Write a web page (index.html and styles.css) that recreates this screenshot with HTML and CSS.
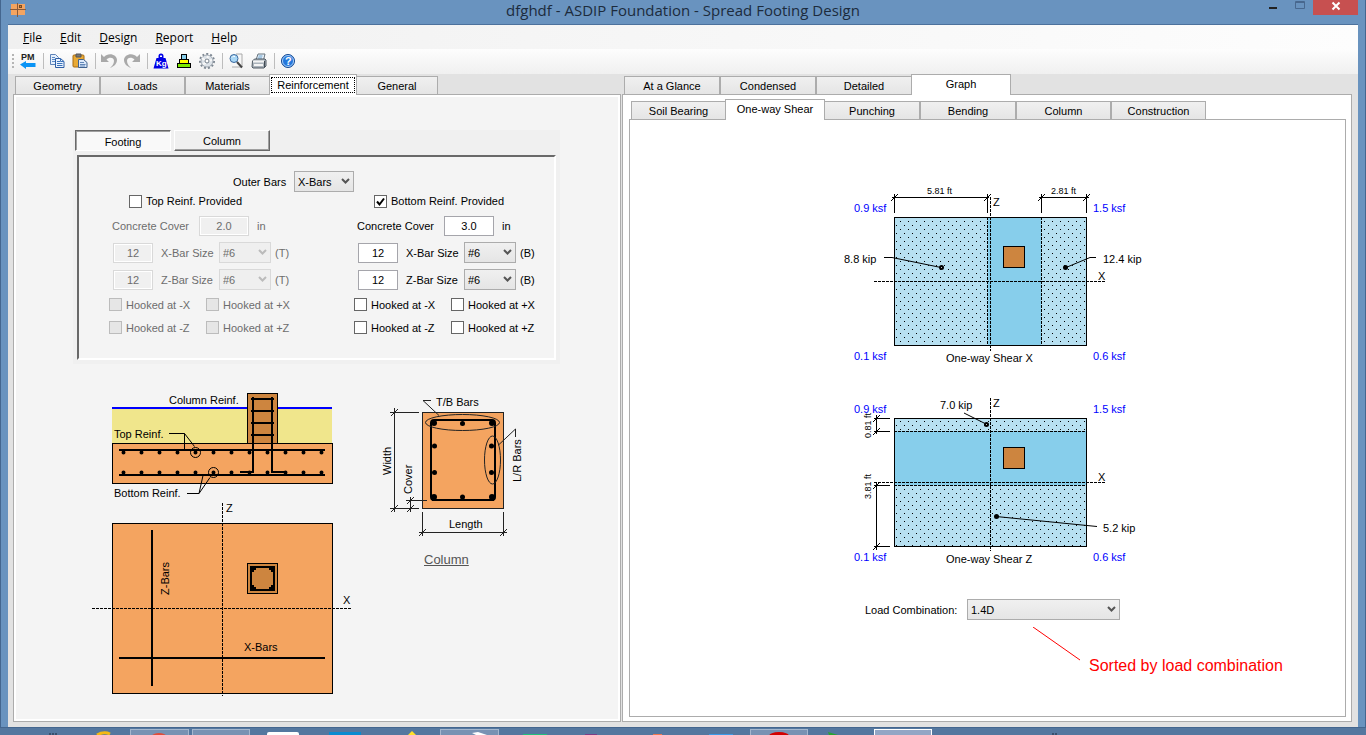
FILE: index.html
```html
<!DOCTYPE html>
<html lang="en">
<head>
<meta charset="utf-8">
<title>dfghdf - ASDIP Foundation - Spread Footing Design</title>
<link rel="stylesheet" href="styles.css">
</head>
<body>
<div class="frame">
  <header class="titlebar">
    <svg class="app-icon" width="16" height="14" viewBox="0 0 16 14" shape-rendering="crispEdges"><rect x="1" y="1" width="14" height="11" fill="#f4a460"/><path d="M0 6.500h16M7.500 0v14" stroke="#8a5a3a"/><rect x="9.500" y="2.500" width="2" height="2" fill="#cd853f" stroke="#7a4a20"/></svg>
    <h1 class="title">dfghdf - ASDIP Foundation - Spread Footing Design</h1>
    <div class="window-buttons">
      <button class="win-btn" aria-label="Minimize"><svg width="10" height="10" viewBox="0 0 10 10"><path d="M1 8h8" stroke="#222" stroke-width="2"/></svg></button>
      <button class="win-btn" aria-label="Maximize"><svg width="10" height="10" viewBox="0 0 10 10"><path d="M.5 1.500h9v7h-9zM0 2.500h10" fill="none" stroke="#48688f"/></svg></button>
      <button class="win-btn close" aria-label="Close"><svg width="10" height="10" viewBox="0 0 10 10"><path d="M1.500 1.500l7 7m0-7l-7 7" stroke="#fff" stroke-width="2"/></svg></button>
    </div>
  </header>
  <main class="window">
    <nav class="menubar">
      <button class="menu"><u>F</u>ile</button>
      <button class="menu"><u>E</u>dit</button>
      <button class="menu"><u>D</u>esign</button>
      <button class="menu"><u>R</u>eport</button>
      <button class="menu"><u>H</u>elp</button>
    </nav>
    <div class="toolbar">
      <span class="grip"></span>
      <button class="tool" aria-label="PM"><svg width="16" height="16" viewBox="0 0 16 16"><text x="1" y="7" font-size="9" font-weight="bold" fill="#222">PM</text><path d="M0 11.500L6 8v2h9.500v4H6v2z" fill="#0a94f5"/></svg></button>
      <span class="sep"></span>
      <button class="tool" aria-label="Copy"><svg width="16" height="16" viewBox="0 0 16 16"><path d="M1.500 1.500h5l3 3v7h-8z" fill="#e6f0fc" stroke="#5e83b8"/><path d="M3 4.500h3M3 6.500h4M3 8.500h4" stroke="#5b8ac6"/><path d="M6.500 5.500h5l3.500 3v6h-8.500z" fill="#eaf3ff" stroke="#2e5ea5"/><path d="M11.500 5.500v3h3.500M8 8.500h3M8 10.500h5.500M8 12.500h5.500" fill="none" stroke="#3c73ba"/></svg></button>
      <button class="tool" aria-label="Paste"><svg width="16" height="16" viewBox="0 0 16 16"><rect x="1" y="2" width="11" height="12" rx="1" fill="#e9aa35" stroke="#a76b12"/><path d="M4 1h5v3H4z" fill="#777" stroke="#555"/><path d="M6.500 6.500h5l3.500 3v5H6.500z" fill="#dce9fa" stroke="#40628f"/><path d="M8 9.500h4M8 11.500h5.500M8 13h5" stroke="#6287b8"/></svg></button>
      <span class="sep"></span>
      <button class="tool" aria-label="Undo"><svg width="16" height="16" viewBox="0 0 16 16"><path d="M0 1v8h8L5.500 6.500C8 4 13 4 13 8c0 3-2 5-4 7 5-2 7-5 7-8C16 1 7-1 3 4z" fill="#a9a9a9"/></svg></button>
      <button class="tool" aria-label="Redo"><svg width="16" height="16" viewBox="0 0 16 16"><path d="M16 1v8H8l2.500-2.500C8 4 3 4 3 8c0 3 2 5 4 7-5-2-7-5-7-8C0 1 9-1 13 4z" fill="#a9a9a9"/></svg></button>
      <span class="sep"></span>
      <button class="tool" aria-label="Weights"><svg width="16" height="16" viewBox="0 0 16 16"><path d="M5.500 3a2.500 2.500 0 0 1 5 0v2h2l3 10.500h-15L3.500 5h2z" fill="#0000e6"/><path d="M7 4V2.500h2V4z" fill="#fff"/><text x="3" y="13" font-size="8" font-weight="bold" fill="#fff">Kg</text></svg></button>
      <button class="tool" aria-label="Stack"><svg width="16" height="16" viewBox="0 0 16 16" shape-rendering="crispEdges" stroke="#000"><rect x="5.500" y="1.500" width="5" height="5" fill="#87ceeb"/><rect x="3.500" y="6.500" width="9" height="4" fill="#ff0"/><rect x="1.500" y="10.500" width="13" height="4" fill="#7dea00"/></svg></button>
      <button class="tool" aria-label="Settings"><svg width="18" height="18" viewBox="0 0 18 18"><circle cx="9" cy="9" r="7" fill="none" stroke="#7d8792" stroke-width="2" stroke-dasharray="2 2"/><circle cx="9" cy="9" r="6" fill="#dce2e8" stroke="#a3abb4"/><path d="M4 6l4 3m2-5l-1 4m5 0l-4 1m-5 3l3-1" stroke="#f8f8f8" stroke-width="2"/><circle cx="9" cy="9" r="2" fill="#fff" stroke="#76818c"/></svg></button>
      <span class="sep"></span>
      <button class="tool" aria-label="Preview"><svg width="16" height="16" viewBox="0 0 16 16"><path d="M8 1h6v13H4" fill="#f7f7f7" stroke="#aaa"/><circle cx="6" cy="5.500" r="4" fill="#a9d7f5" stroke="#3c6aa0"/><path d="M4 4.500q1-2 3-1" stroke="#fff" fill="none"/><path d="M9 9l5 5.500" stroke="#444" stroke-width="2"/></svg></button>
      <button class="tool" aria-label="Print"><svg width="16" height="16" viewBox="0 0 16 16"><path d="M5 7l2-6h7l-1.500 6z" fill="#eaf3fb" stroke="#67747e"/><path d="M7.500 3h4M7 5h4" stroke="#68a0cd"/><path d="M1.500 8l2-2H14l1 1v6l-2 2H2l-1-1z" fill="#abb4bc" stroke="#515b64"/><path d="M2 8.500h11M3 12h9" stroke="#f4f4f4" stroke-width="2"/><path d="M13.500 8v6" stroke="#414b54"/></svg></button>
      <span class="sep"></span>
      <button class="tool" aria-label="Help"><svg width="16" height="16" viewBox="0 0 16 16"><circle cx="8" cy="8" r="6.500" fill="#2477dc" stroke="#174990"/><circle cx="8" cy="8" r="5.500" fill="none" stroke="#a8cdf5"/><text x="5" y="12" font-size="11" font-weight="bold" fill="#fff">?</text></svg></button>
    </div>

    <div class="workspace">
      <section class="pane">
        <div class="tabs" role="tablist">
          <button class="tab w85" role="tab">Geometry</button>
          <button class="tab w85" role="tab">Loads</button>
          <button class="tab w85" role="tab">Materials</button>
          <button class="tab w88 selected focused" role="tab" aria-selected="true"><span>Reinforcement</span></button>
          <button class="tab w82" role="tab">General</button>
        </div>
        <div class="sheet input-sheet">
          <div class="form-block">
            <div class="toggles">
              <button class="toggle pressed">Footing</button>
              <button class="toggle">Column</button>
            </div>
            <form class="group">
              <div class="outer-row">
                <label for="outer">Outer Bars</label>
                <select id="outer" class="sel w60"><option>X-Bars</option></select>
              </div>
              <div class="layers">
                <div class="layer">
                  <div class="row check-row"><label class="check"><input type="checkbox">Top Reinf. Provided</label></div>
                  <div class="off">
                    <div class="row cover-row"><label for="tc">Concrete Cover</label><input id="tc" class="num w50" value="2.0" disabled><span>in</span></div>
                    <div class="row bar-row"><input class="num w40" value="12" aria-label="X bars" disabled><label for="tx">X-Bar Size</label><select id="tx" class="sel w52" disabled><option>#6</option></select><span>(T)</span></div>
                    <div class="row bar-row"><input class="num w40" value="12" aria-label="Z bars" disabled><label for="tz">Z-Bar Size</label><select id="tz" class="sel w52" disabled><option>#6</option></select><span>(T)</span></div>
                    <div class="row hook-row"><label class="check"><input type="checkbox" disabled>Hooked at -X</label><label class="check"><input type="checkbox" disabled>Hooked at +X</label></div>
                    <div class="row hook-row"><label class="check"><input type="checkbox" disabled>Hooked at -Z</label><label class="check"><input type="checkbox" disabled>Hooked at +Z</label></div>
                  </div>
                </div>
                <div class="layer">
                  <div class="row check-row"><label class="check"><input type="checkbox" checked>Bottom Reinf. Provided</label></div>
                  <div>
                    <div class="row cover-row"><label for="bc">Concrete Cover</label><input id="bc" class="num w50" value="3.0"><span>in</span></div>
                    <div class="row bar-row"><input class="num w40" value="12" aria-label="X bars"><label for="bx">X-Bar Size</label><select id="bx" class="sel w52"><option>#6</option></select><span>(B)</span></div>
                    <div class="row bar-row"><input class="num w40" value="12" aria-label="Z bars"><label for="bz">Z-Bar Size</label><select id="bz" class="sel w52"><option>#6</option></select><span>(B)</span></div>
                    <div class="row hook-row"><label class="check"><input type="checkbox">Hooked at -X</label><label class="check"><input type="checkbox">Hooked at +X</label></div>
                    <div class="row hook-row"><label class="check"><input type="checkbox">Hooked at -Z</label><label class="check"><input type="checkbox">Hooked at +Z</label></div>
                  </div>
                </div>
              </div>
            </form>
          </div>

          <div class="figures">
            <svg class="drawing" width="265" height="310" viewBox="92 390 265 310">
              <g shape-rendering="crispEdges">
                <rect x="112" y="409" width="220" height="35" fill="#f0e68c"/>
                <rect x="112" y="407" width="220" height="2" fill="#00f"/>
                <rect x="112.500" y="443.500" width="220" height="40" fill="#f4a460" stroke="#000"/>
                <rect x="247.500" y="393.500" width="30" height="50" fill="#cd853f" stroke="#000"/>
                <path d="M253 397v75h-13M272 397v75h15M251 399h23M251 411h23M251 423h23M251 435h23M119 450h206M119 475h206" fill="none" stroke="#000" stroke-width="2"/>
              </g>
              <g stroke="#000" stroke-width="4" stroke-linecap="round" stroke-dasharray="0 18">
                <path d="M123.500 452.500h199"/><path d="M123.500 472.500h199"/>
              </g>
              <g fill="none" stroke="#000">
                <circle cx="195.500" cy="452.500" r="5"/><circle cx="213.500" cy="472.500" r="5"/>
                <path d="M169 433.500h15.500v16M184.500 433.500l10 13M187 493.500h12l4-18M199 493.500l11-16"/>
              </g>
              <text x="169" y="404">Column Reinf.</text>
              <text x="114" y="438">Top Reinf.</text>
              <text x="114" y="497">Bottom Reinf.</text>
              <g shape-rendering="crispEdges">
                <rect x="112.500" y="523.500" width="220" height="170" fill="#f4a460" stroke="#000"/>
                <path d="M152 530v156M119 658h206" stroke="#000" stroke-width="2"/>
                <path d="M222.500 503v193M92 608.500h260" stroke="#000" stroke-dasharray="3 1"/>
                <rect x="247.500" y="563.500" width="30" height="30" fill="#cd853f" stroke="#000"/>
                <rect x="251" y="567" width="23" height="23" fill="none" stroke="#000" stroke-width="2"/>
                <path d="M252 568h4v2h-2v2h-2zM273 568h-4v2h2v2h2zM252 589h4v-2h-2v-2h-2zM273 589h-4v-2h2v-2h2z"/>
              </g>
              <text x="226" y="512">Z</text>
              <text x="343" y="604">X</text>
              <text x="244" y="651">X-Bars</text>
              <text transform="translate(169 595) rotate(-90)">Z-Bars</text>
            </svg>
            <div class="column-figure">
              <svg class="drawing" width="150" height="150" viewBox="376 390 150 150">
                <rect x="422.500" y="412.500" width="81" height="96" fill="#f4a460" stroke="#222"/>
                <rect x="431" y="420" width="64" height="80" rx="3" fill="none" stroke="#000" stroke-width="2"/>
                <path d="M432 500h62" stroke="#000" stroke-width="2"/>
                <g><circle cx="434" cy="423" r="3"/><circle cx="462.500" cy="423.500" r="2.500"/><circle cx="492" cy="423" r="3"/><circle cx="434.500" cy="446" r="2.500"/><circle cx="491.500" cy="446" r="2.500"/><circle cx="434.500" cy="472.500" r="2.500"/><circle cx="491.500" cy="472.500" r="2.500"/><circle cx="434" cy="497" r="3"/><circle cx="462.500" cy="497" r="2.500"/><circle cx="492" cy="497" r="3"/></g>
                <g fill="none" stroke="#222">
                  <ellipse cx="462.500" cy="422.500" rx="37" ry="8"/><ellipse cx="492.500" cy="460" rx="8" ry="24"/>
                  <path d="M431 400.500h-8l16 15M515.500 437v-8l-17 16"/>
                  <path d="M394.500 408v104M390 412.500h29M390 508.500h29M391 416l7-7M391 512l7-7M410.500 497v15M406 500.500h21M407 504l7-7M407 512l7-7M422.500 512v24M503.500 512v24M419 532.500h88M419 536l7-7M500 536l7-7"/>
                </g>
                <text x="436" y="406">T/B Bars</text>
                <text x="449" y="528">Length</text>
                <text transform="translate(391 475) rotate(-90)">Width</text>
                <text transform="translate(412 494) rotate(-90)">Cover</text>
                <text transform="translate(521 482) rotate(-90)">L/R Bars</text>
              </svg>
              <a class="column-link" href="#column">Column</a>
            </div>
          </div>
        </div>
      </section>

      <section class="pane">
        <div class="tabs" role="tablist">
          <button class="tab w96" role="tab">At a Glance</button>
          <button class="tab w96" role="tab">Condensed</button>
          <button class="tab w96" role="tab">Detailed</button>
          <button class="tab w100 selected" role="tab" aria-selected="true">Graph</button>
        </div>
        <div class="sheet graph-sheet">
          <div class="tabs" role="tablist">
            <button class="tab w95" role="tab">Soil Bearing</button>
            <button class="tab w100 selected" role="tab" aria-selected="true">One-way Shear</button>
            <button class="tab w96" role="tab">Punching</button>
            <button class="tab w96" role="tab">Bending</button>
            <button class="tab w95" role="tab">Column</button>
            <button class="tab w95" role="tab">Construction</button>
          </div>
          <div class="plot">
            <div class="plot-body">
              <svg class="drawing" width="325" height="382" viewBox="825 184 325 382">
                <defs><pattern id="dots" width="8" height="8" patternUnits="userSpaceOnUse"><rect width="8" height="8" fill="#b7e0f1"/><rect x="0" y="1" width="1" height="1"/><rect x="4" y="5" width="1" height="1"/></pattern></defs>
                <g shape-rendering="crispEdges">
                  <rect x="894" y="217" width="192" height="128" fill="#87ceeb"/>
                  <rect x="894" y="217" width="94" height="128" fill="url(#dots)"/>
                  <rect x="1041" y="217" width="45" height="128" fill="url(#dots)"/>
                  <rect x="894.500" y="217.500" width="192" height="128" fill="none" stroke="#000"/>
                  <rect x="1003.500" y="246.500" width="21" height="21" fill="#cd853f" stroke="#000"/>
                  <rect x="894" y="418" width="192" height="128" fill="#87ceeb"/>
                  <rect x="894" y="418" width="192" height="13" fill="url(#dots)"/>
                  <rect x="894" y="485" width="192" height="61" fill="url(#dots)"/>
                  <rect x="894.500" y="418.500" width="192" height="128" fill="none" stroke="#000"/>
                  <rect x="1003.500" y="447.500" width="21" height="21" fill="#cd853f" stroke="#000"/>
                  <path d="M987.500 217v128M990.500 197v154M1041.500 217v128M874 281.500h232M894 431.500h192M894 485.500h192M874 482.500h232M990.500 398v153" stroke="#000" stroke-dasharray="3 1"/>
                  <path d="M892 197.500h97M894.500 194v19M987.500 194v19M1039 197.500h50M1041.500 194v19M1086.500 194v19M876.500 415v19M874 418.500h16M874 431.500h16M876.500 483v67M874 485.500h16M874 546.500h16" stroke="#000"/>
                </g>
                <g fill="none" stroke="#000">
                  <path d="M891 201l7-7M984 201l7-7M1038 201l7-7M1083 201l7-7M873 422l7-7M873 435l7-7M873 489l7-7M873 550l7-7"/>
                  <path d="M884 257.500h8l49 10M1096 257.500h-6l-24 10M964 413l22 11M996 516.500l101 10"/>
                </g>
                <g><circle cx="941.500" cy="267.500" r="2.500"/><circle cx="1065.500" cy="267.500" r="2.500"/><circle cx="986.500" cy="424.500" r="2.500"/><circle cx="996.500" cy="516.500" r="2.500"/></g>
                <circle cx="941.500" cy="267.500" r=".5" fill="#fff"/><circle cx="986.500" cy="424.500" r=".5" fill="#fff"/>
                <g class="dim">
                  <text x="927" y="194">5.81 ft</text><text x="1051" y="194">2.81 ft</text>
                  <text transform="translate(871 438) rotate(-90)">0.81 ft</text>
                  <text transform="translate(871 499) rotate(-90)">3.81 ft</text>
                </g>
                <g class="ksf">
                  <text x="854" y="212">0.9 ksf</text><text x="1093" y="212">1.5 ksf</text><text x="854" y="360">0.1 ksf</text><text x="1093" y="360">0.6 ksf</text>
                  <text x="854" y="413">0.9 ksf</text><text x="1093" y="413">1.5 ksf</text><text x="854" y="561">0.1 ksf</text><text x="1093" y="561">0.6 ksf</text>
                </g>
                <text x="844" y="263">8.8 kip</text><text x="1103" y="263">12.4 kip</text>
                <text x="940" y="409">7.0 kip</text><text x="1103" y="532">5.2 kip</text>
                <text x="993" y="206">Z</text><text x="1098" y="280">X</text><text x="993" y="407">Z</text><text x="1098" y="481">X</text>
                <text x="946" y="362">One-way Shear X</text><text x="946" y="563">One-way Shear Z</text>
              </svg>
              <div class="combo-row">
                <label for="combo">Load Combination:</label>
                <select id="combo" class="sel"><option>1.4D</option></select>
              </div>
              <div class="note">
                <svg width="48" height="34" viewBox="0 0 48 34"><path d="M0 0l47 33" stroke="#f00"/></svg>
                <span>Sorted by load combination</span>
              </div>
            </div>
          </div>
        </div>
      </section>
    </div>
  </main>
</div>
<footer class="taskbar">
  <svg width="1366" height="7" viewBox="0 0 1366 7">
    <g fill="#7892b3" stroke="#a5b7ce"><rect x="130.500" y="1.500" width="58" height="9"/><rect x="192.500" y="1.500" width="57" height="9"/><rect x="440.500" y="1.500" width="58" height="9"/><rect x="750.500" y="1.500" width="57" height="9"/></g>
    <rect x="874.500" y="1.500" width="57" height="9" fill="#93a6c5" stroke="#fff"/>
    <path d="M50 5v2M53 5v2M56 5v2M1053 5v2M1056 5v2" stroke="#1c2b3c"/>
    <path d="M97 7q7-4 13-1" fill="none" stroke="#f5b913" stroke-width="3"/>
    <ellipse cx="159" cy="8" rx="7" ry="3" fill="#e04d3a"/>
    <rect x="267" y="4" width="32" height="6" rx="2" fill="#fff"/>
    <rect x="329" y="4" width="32" height="3" fill="#0a8bd0"/>
    <path d="M408 7l4-4 4 4z" fill="#ffe028"/>
    <path d="M472 5l6-1 9 3h-11z" fill="#fff"/>
    <path d="M523 6h24v1h-24z" fill="#22c07c"/><path d="M585 6h12v1h-12z" fill="#7d3c86"/><path d="M653 6h9v1h-9z" fill="#f07850"/><path d="M709 6h24v1h-24z" fill="#3b9ae8"/>
    <ellipse cx="779" cy="8" rx="10" ry="4" fill="#d40000"/><path d="M828 4l10 3h-9z" fill="#28a532"/>
  </svg>
</footer>
</body>
</html>
```
FILE: styles.css
```css
* { box-sizing: border-box; }
body {
  margin: 0;
  min-height: 100vh;
  display: flex;
  flex-direction: column;
  background: #6993bf;
  color: #000;
  font: 11px/14px "Liberation Sans", Arial, sans-serif;
}
button, input, select { font: inherit; color: inherit; margin: 0; padding: 0; }
button { background: none; border: 0; }
svg { display: block; flex: none; }

.frame {
  flex: 1;
  display: flex;
  flex-direction: column;
  padding: 0 7px;
  border-left: 1px solid #44668f;
  border-right: 1px solid #44668f;
}
.titlebar {
  height: 24px;
  display: grid;
  grid-template-columns: 110px 1fr 110px;
  align-items: start;
}
.app-icon { margin: 3px 0 0 2px; }
.title {
  margin: 0;
  text-align: center;
  font: 15px/20px "Open Sans", "Noto Sans", sans-serif;
  color: #1c2b3c;
}
.window-buttons { display: flex; justify-content: flex-end; }
.win-btn { width: 27px; height: 15px; display: flex; justify-content: center; }
.win-btn.close { width: 45px; background: #c75050; align-items: center; padding-bottom: 4px; }

.window {
  flex: 1;
  display: flex;
  flex-direction: column;
  background: #e2e2e2;
  border-top: 1px solid #4c719c;
}
.menubar {
  height: 24px;
  display: flex;
  align-items: center;
  gap: 18px;
  padding: 1px 0 0 15px;
  background: linear-gradient(90deg, #f0f0f0, #fdfdfd);
  font: 12px/16px "Open Sans", "Noto Sans", sans-serif;
}
.toolbar {
  height: 25px;
  display: flex;
  align-items: center;
  padding: 0 0 2px 4px;
  background: linear-gradient(#fdfdfd, #f0f0f0);
}
.grip { width: 2px; height: 14px; margin-right: 2px; background: repeating-linear-gradient(#b5b5b5 0 2px, transparent 2px 4px); }
.tool { width: 23px; height: 22px; display: flex; align-items: center; justify-content: center; }
.tool text { font-family: "Liberation Sans", sans-serif; }
.sep { width: 1px; height: 16px; margin: 0 1px 0 4px; background: #bdbdbd; }

.workspace {
  flex: 1;
  display: grid;
  grid-template-columns: 608fr 730fr;
  gap: 1px;
  padding: 0 6px 5px 5px;
}
.pane { display: flex; flex-direction: column; min-width: 0; }
.tabs { display: flex; align-items: flex-end; height: 20px; padding-left: 2px; }
.tab {
  height: 18px;
  border: 1px solid #acacac;
  border-bottom: 0;
  background: linear-gradient(#f0f0f0, #e5e5e5);
  text-align: center;
  white-space: nowrap;
}
.tab.selected {
  position: relative;
  height: 21px;
  margin: 0 -1px -1px;
  background: #fff;
  padding-bottom: 2px;
}
.tab.focused { padding: 0 1px 1px; }
.focused span { display: block; line-height: 14px; border: 1px dotted #000; }
.w82 { width: 82px; } .w85 { width: 85px; } .w88 { width: 88px; } .w95 { width: 95px; } .w96 { width: 96px; } .w100 { width: 100px; }
.sheet { flex: 1; border: 1px solid #acacac; }
.input-sheet { background: #f4f4f4; box-shadow: inset 2px 2px #fff, inset -2px -2px #fff; }
.graph-sheet { display: flex; flex-direction: column; background: #fff; padding: 4px 5px 4px 6px; }

.form-block { width: 487px; margin: 35px 0 0 59px; padding: 0 4px 4px 2px; background: #f0f0f0; }
.toggles { display: flex; gap: 3px; }
.toggle { width: 96px; height: 21px; border: 1px solid; border-color: #fff #696969 #696969 #fff; box-shadow: inset -1px -1px #a0a0a0; }
.toggle.pressed { border-color: #696969 #fff #fff #696969; background: #f9f9f9; box-shadow: inset 1px 1px #a0a0a0; padding-top: 2px; }
.group {
  margin: 4px 0 0 2px;
  padding: 14px 0 19px 30px;
  background: #f4f4f4;
  border: 2px solid;
  border-color: #696969 #fff #fff #696969;
}
.outer-row { display: flex; align-items: center; padding-left: 124px; }
.outer-row label { width: 61px; }
.layers { display: grid; grid-template-columns: 245px 1fr; }
.row { display: flex; align-items: center; height: 27px; white-space: nowrap; }
.check-row { height: 20px; padding: 0 0 2px 20px; }
.cover-row { padding-left: 3px; }
.cover-row label { width: 87px; }
.cover-row span { margin-left: 8px; }
.bar-row { padding-left: 4px; }
.bar-row label { width: 58px; margin-left: 8px; }
.bar-row span { margin-left: 4px; }
.hook-row { height: 23px; }
.hook-row .check { width: 97px; }
.off { color: #6d6d6d; }
.check { display: flex; align-items: center; gap: 4px; }
.check input { appearance: none; width: 13px; height: 13px; border: 1px solid #666; background: #fff; }
.check input:checked { background: #fff url("data:image/svg+xml,%3Csvg xmlns='http://www.w3.org/2000/svg' viewBox='0 0 11 11'%3E%3Cpath d='M2 5.500l2.500 3L9 2.500' fill='none' stroke='%23000' stroke-width='2'/%3E%3C/svg%3E"); }
.check input:disabled { border-color: #bcbcbc; background: #e6e6e6; }
.num { height: 20px; border: 1px solid #a5a5ab; background: #fff; text-align: center; border-radius: 0; }
.num:disabled { border-color: #d9d9d9; background: #f0f0f0; box-shadow: inset 0 0 0 1px #fff; }
.w40 { width: 40px; } .w50 { width: 50px; } .w52 { width: 52px; } .w60 { width: 60px; }
.sel {
  appearance: none;
  height: 21px;
  padding-left: 3px;
  border: 1px solid #acacac;
  border-radius: 0;
  background: url("data:image/svg+xml,%3Csvg xmlns='http://www.w3.org/2000/svg' width='9' height='7' viewBox='0 0 9 7'%3E%3Cpath d='M1 1l3.500 3.500L8 1' fill='none' stroke='%23555' stroke-width='2'/%3E%3C/svg%3E") right 3px center no-repeat, linear-gradient(#f0f0f0, #e5e5e5);
}
.sel:disabled {
  opacity: 1;
  border-color: #d9d9d9;
  background: url("data:image/svg+xml,%3Csvg xmlns='http://www.w3.org/2000/svg' width='9' height='7' viewBox='0 0 9 7'%3E%3Cpath d='M1 1l3.500 3.500L8 1' fill='none' stroke='%23bbb' stroke-width='2'/%3E%3C/svg%3E") right 3px center no-repeat, #efefef;
}

.figures { display: flex; gap: 19px; margin: 26px 0 0 78px; }
.drawing { font-size: 11px; }
.dim { font-size: 9px; }
.ksf { fill: #00f; }
.column-link { display: inline-block; margin: 12px 0 0 48px; font-size: 13px; line-height: 16px; color: #555; }

.plot { flex: 1; border: 1px solid #acacac; padding-top: 64px; }
.plot-body { width: 325px; margin: 0 auto; }
.combo-row { display: flex; align-items: center; margin-top: 33px; padding: 0 30px 0 40px; white-space: nowrap; }
.combo-row label { width: 102px; }
.combo-row .sel { flex: 1; min-width: 0; }
.note {
  display: flex;
  align-items: flex-end;
  gap: 8px;
  margin-top: 7px;
  padding-left: 208px;
  white-space: nowrap;
  font: 16px/18px "Liberation Sans", Arial, sans-serif;
  color: #f00;
}
.note svg { margin-bottom: 14px; }

.taskbar { height: 8px; overflow: hidden; background: #54779f; border-top: 1px solid #44668f; }
```
